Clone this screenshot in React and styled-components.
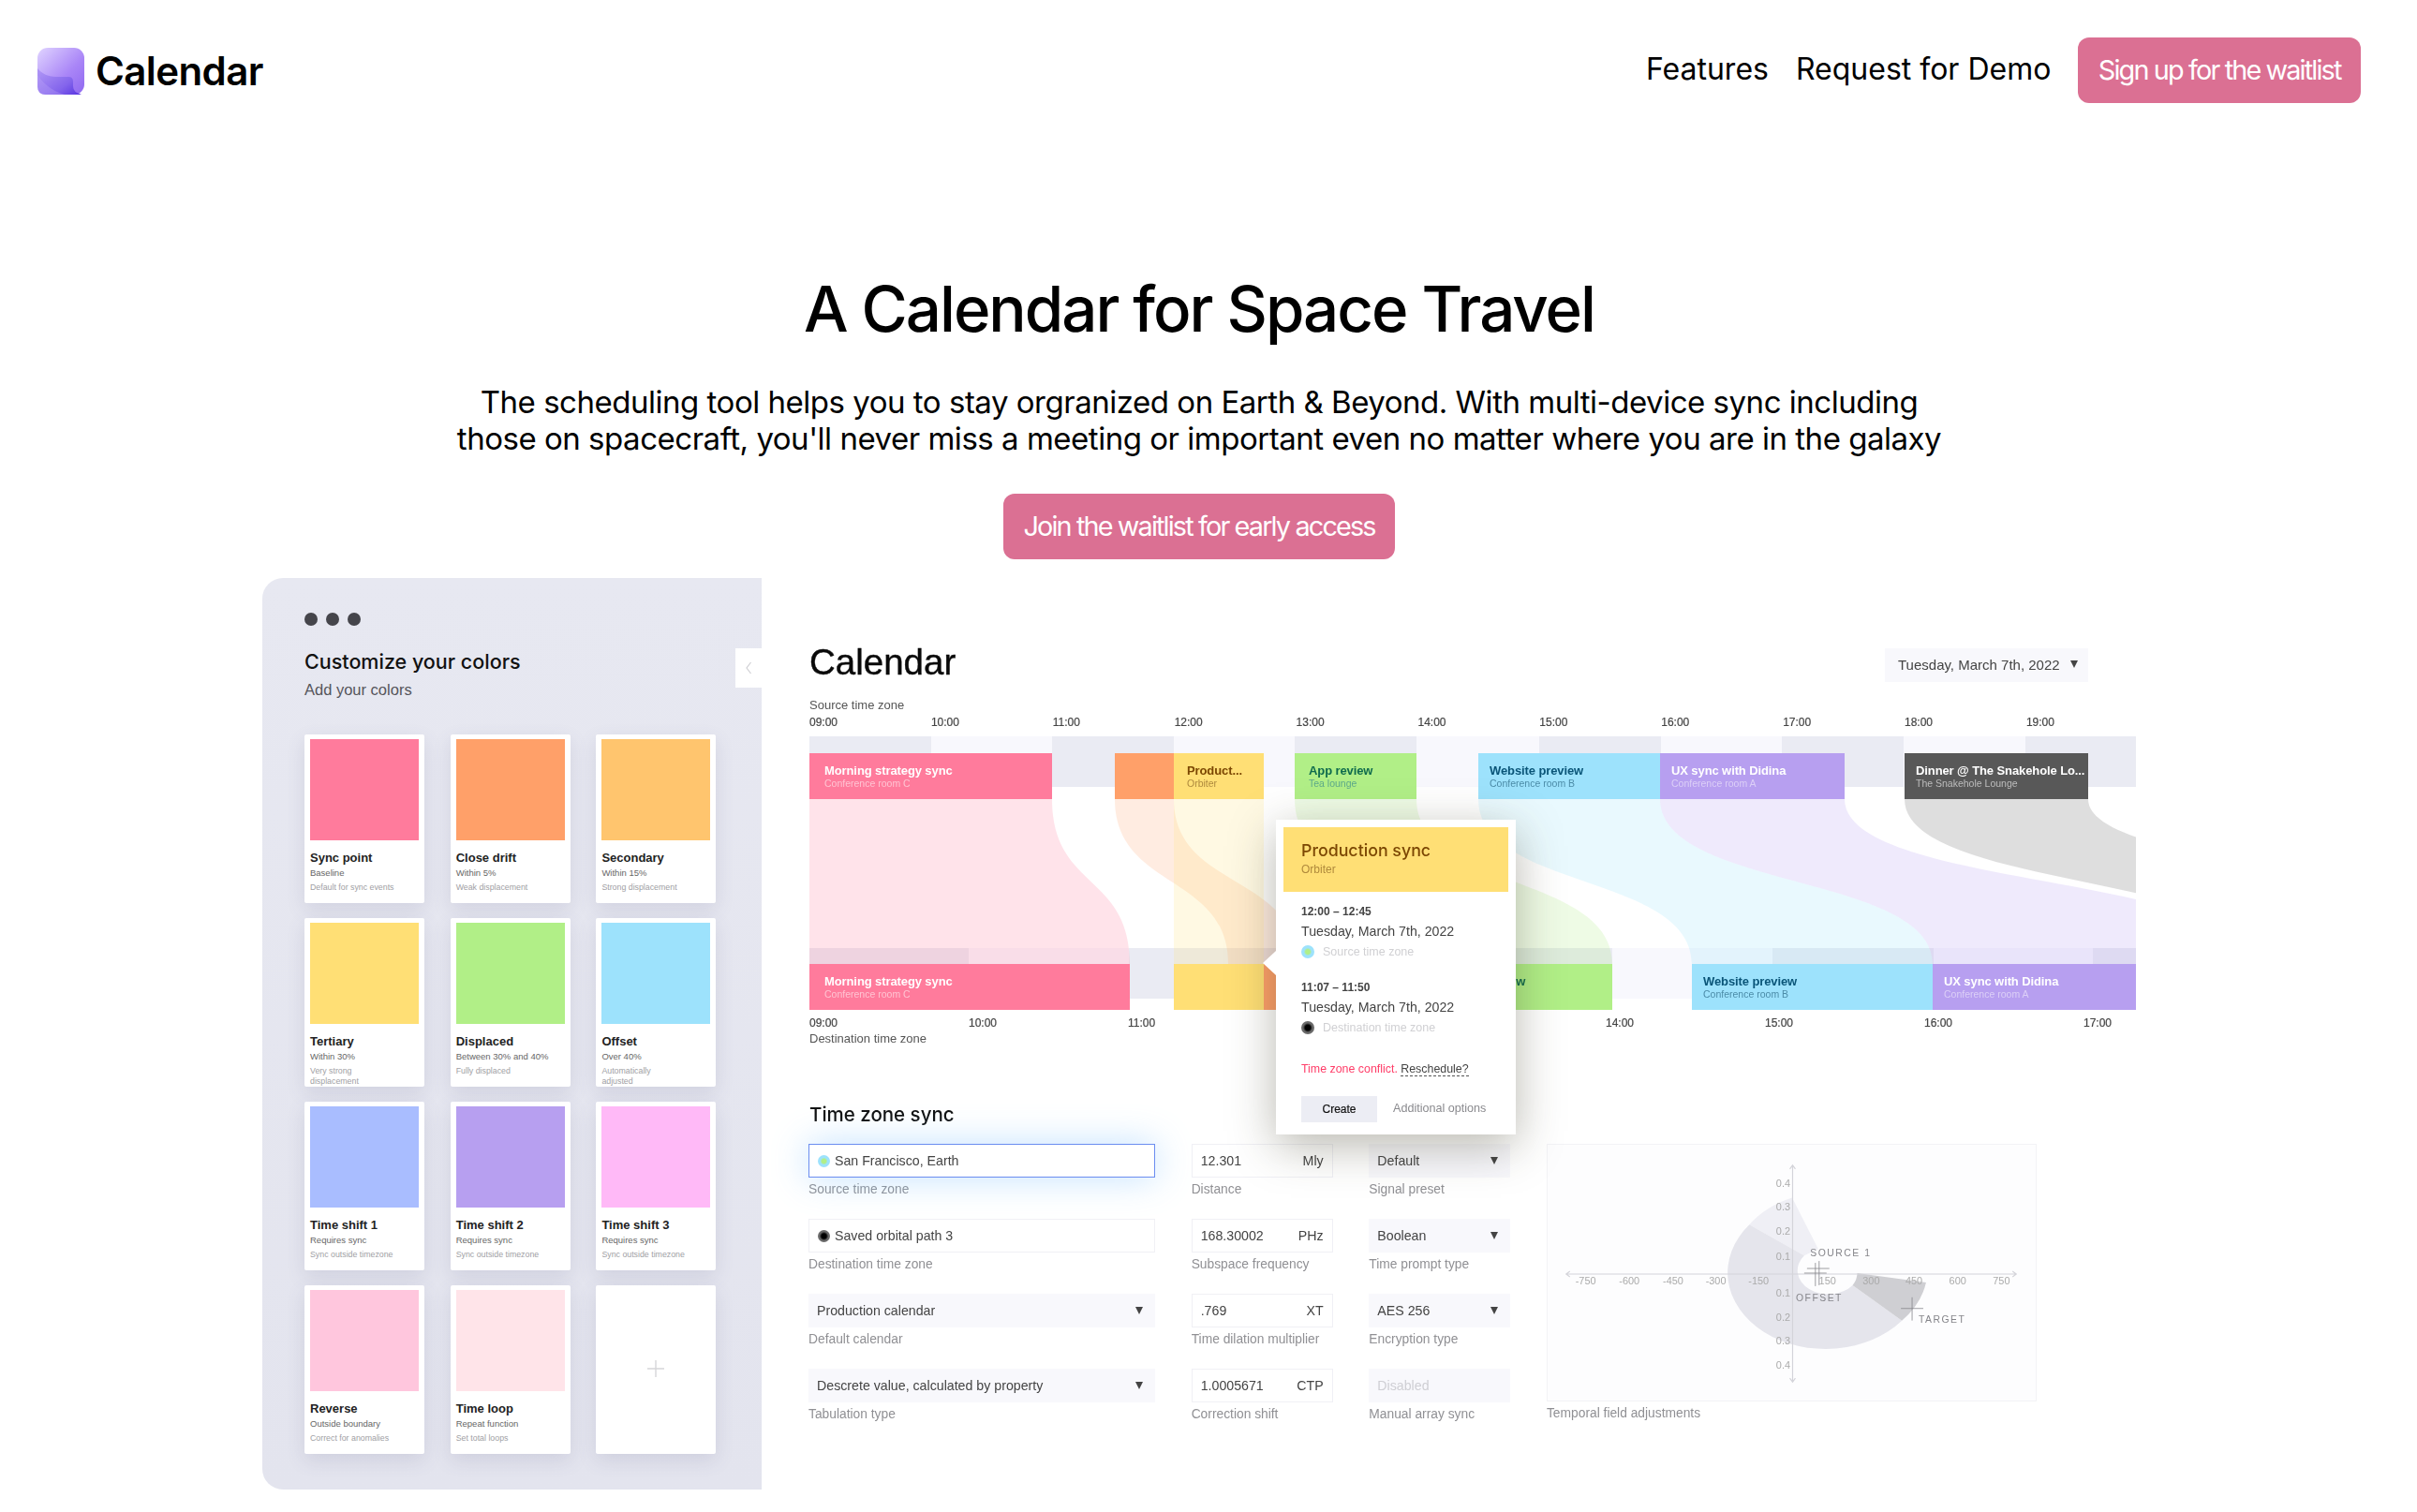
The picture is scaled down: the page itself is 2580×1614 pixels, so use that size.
import styled, { createGlobalStyle } from 'styled-components';

const GlobalStyle = createGlobalStyle`
  html, body {
    margin: 0;
    padding: 0;
    background: #fff;
  }
  body {
    font-family: 'Inter', 'Liberation Sans', sans-serif;
    color: #000;
  }
`;

const Page = styled.div`
  width: 2580px;
  height: 1614px;
  overflow: hidden;
`;

const Header = styled.header`
  display: flex;
  align-items: center;
  justify-content: space-between;
  padding: 40px 60px 0 40px;
`;

const Brand = styled.div`
  display: flex;
  align-items: center;
  gap: 12px;
  margin-top: 2px;
  font-size: 42px;
  font-weight: 600;
  letter-spacing: -0.6px;
  line-height: 52px;
`;

const Nav = styled.nav`
  display: flex;
  align-items: center;
  font-size: 32px;
`;

const NavLink = styled.a`
  margin: 0 29px 4px 0;
  color: #000;
`;

const PinkButton = styled.button`
  height: 70px;
  padding: 0 21.5px 2px;
  border: none;
  border-radius: 12px;
  background: #db7093;
  color: #fff;
  font-family: inherit;
  font-size: 28.8px;
  letter-spacing: -1.85px;
`;

const Hero = styled.section`
  display: flex;
  flex-direction: column;
  align-items: center;
  padding-right: 20px;
  text-align: center;
`;

const Title = styled.h1`
  margin: 180px 0 0;
  font-size: 67.2px;
  line-height: 80px;
  font-weight: 500;
  letter-spacing: -2px;
`;

const Lead = styled.p`
  margin: 40px 0 39px;
  font-size: 33px;
  line-height: 39px;
  letter-spacing: -0.48px;
`;

const Preview = styled.div`
  display: flex;
  width: 2000px;
  margin: 20px 0 0 280px;
  font-family: 'Liberation Sans', Arial, sans-serif;
  filter: blur(0.35px);
`;

const Sidebar = styled.aside`
  position: relative;
  box-sizing: border-box;
  flex: 0 0 533px;
  height: 973px;
  padding: 37px 0 0 45px;
  border-radius: 22px 0 0 22px;
  background: linear-gradient(180deg, #e7e8f1, #e3e4ee);
`;

const Dots = styled.div`
  display: flex;
  gap: 9px;
`;

const Dot = styled.span`
  width: 14px;
  height: 14px;
  border-radius: 50%;
  background: #45454b;
`;

const SideTitle = styled.h2`
  margin: 24px 0 0;
  font-family: 'Inter', sans-serif;
  font-size: 21.5px;
  line-height: 28px;
  font-weight: 500;
  color: #111;
`;

const SideSub = styled.div`
  margin-top: 6px;
  font-size: 16.5px;
  line-height: 20px;
  color: #55555b;
`;

const CollapseTab = styled.div`
  position: absolute;
  top: 75px;
  right: 0;
  display: flex;
  align-items: center;
  justify-content: center;
  width: 28px;
  height: 42px;
  background: #fff;
`;

const SwatchGrid = styled.div`
  display: grid;
  grid-template-columns: repeat(3, 128px);
  grid-auto-rows: 180px;
  column-gap: 27.7px;
  row-gap: 16px;
  margin-top: 38px;
`;

const Card = styled.div`
  box-sizing: border-box;
  padding: 5px 6px 0;
  border-radius: 2px;
  background: #fff;
  box-shadow: 0 7px 20px rgba(85, 85, 125, 0.14);
`;

const AddCard = styled(Card)`
  display: flex;
  align-items: center;
  justify-content: center;
  padding: 0 0 3px;
`;

const Swatch = styled.div`
  height: 108px;
  background: ${(p) => p.$color};
`;

const CardTitle = styled.div`
  margin-top: 11px;
  font-size: 13px;
  line-height: 16px;
  font-weight: 700;
  color: #222;
`;

const CardSub = styled.div`
  margin-top: 2px;
  font-size: 9.5px;
  line-height: 12px;
  color: #666;
`;

const CardDesc = styled.div`
  margin-top: 4px;
  font-size: 8.8px;
  line-height: 10.5px;
  color: #a0a0a4;
  white-space: pre-line;
`;

const Content = styled.main`
  flex: 1;
  min-width: 0;
  padding-left: 51px;
`;

const CalendarTop = styled.div`
  display: flex;
  align-items: center;
  justify-content: space-between;
  height: 36px;
  margin-top: 75px;
  padding-right: 51px;
`;

const CalendarTitle = styled.h2`
  margin: 0 0 6px;
  font-size: 38.5px;
  line-height: 46px;
  font-weight: 400;
  color: #0a0a0a;
  -webkit-text-stroke: 0.4px #0a0a0a;
`;

const DatePicker = styled.div`
  display: flex;
  align-items: center;
  justify-content: space-between;
  box-sizing: border-box;
  width: 217px;
  height: 36px;
  padding: 0 11px 2px 14px;
  background: #f8f8fc;
  font-size: 15px;
  color: #444;
`;

const Caret = styled.span`
  flex: none;
  width: 0;
  height: 0;
  border-left: 4.5px solid transparent;
  border-right: 4.5px solid transparent;
  border-top: 8px solid #444;
`;

const BoxCaret = styled(Caret)`
  margin-right: 4px;
`;

const ZoneLabel = styled.div`
  margin-top: ${(p) => p.$top}px;
  font-size: 13px;
  line-height: 16px;
  color: #555;
`;

const Hours = styled.div`
  display: flex;
  margin-top: ${(p) => p.$top}px;
`;

const Hour = styled.span`
  flex: 0 0 ${(p) => p.$width}px;
  font-size: 12px;
  line-height: 14px;
  color: #444;
  -webkit-text-stroke: 0.2px #444;
`;

const Timeline = styled.div`
  position: relative;
  width: 1416px;
  height: 291px;
  margin-top: 8px;
`;

const Strip = styled.div`
  display: flex;
  height: 54px;
  margin-top: ${(p) => p.$top}px;
`;

const StripCell = styled.div`
  background: ${(p) => (p.$dark ? '#eaebf3' : '#f8f8fd')};
`;

const Ribbons = styled.svg`
  position: absolute;
  top: 0;
  left: 0;
  overflow: hidden;
`;

const EventBlock = styled.div`
  position: absolute;
  box-sizing: border-box;
  height: 49px;
  padding: 11px 4px 0 ${(p) => p.$pad}px;
  overflow: hidden;
  background: ${(p) => p.$bg};
  white-space: nowrap;
`;

const EventName = styled.div`
  font-size: 13px;
  line-height: 15px;
  font-weight: 700;
  letter-spacing: -0.1px;
  color: ${(p) => p.$color};
`;

const EventPlace = styled.div`
  font-size: 10.5px;
  line-height: 12px;
  color: ${(p) => p.$color};
`;

const Popover = styled.div`
  position: absolute;
  left: 498px;
  top: 89px;
  z-index: 5;
  box-sizing: border-box;
  width: 256px;
  height: 336px;
  padding: 8px;
  background: #fff;
  box-shadow: 0 12px 46px rgba(62, 58, 35, 0.36);

  &::before {
    content: '';
    position: absolute;
    left: -14px;
    top: 140px;
    border-top: 13px solid transparent;
    border-bottom: 13px solid transparent;
    border-right: 14px solid #fff;
  }
`;

const PopHead = styled.div`
  box-sizing: border-box;
  height: 69px;
  padding: 14px 0 0 19px;
  background: #ffdf75;
`;

const PopTitle = styled.div`
  font-family: 'Inter', sans-serif;
  font-size: 17.8px;
  line-height: 22px;
  font-weight: 500;
  color: #7c4703;
`;

const PopSub = styled.div`
  margin-top: 2px;
  font-size: 12px;
  line-height: 14px;
  color: #b08a3c;
`;

const PopBody = styled.div`
  padding: 13px 0 0 19px;
`;

const TimeSlot = styled.div`
  margin-bottom: 22px;
`;

const SlotTime = styled.div`
  font-size: 12px;
  line-height: 16px;
  font-weight: 700;
  color: #444;
`;

const SlotDate = styled.div`
  margin-top: 4px;
  font-size: 14.2px;
  line-height: 18px;
  color: #444;
`;

const SlotZone = styled.div`
  display: flex;
  align-items: center;
  gap: 9px;
  margin-top: 5px;
  font-size: 12.5px;
  line-height: 16px;
  color: #d0d0d3;
`;

const ZoneDot = styled.span`
  flex: none;
  width: ${(p) => p.$size}px;
  height: ${(p) => p.$size}px;
  border-radius: 50%;
  background: ${(p) =>
    p.$kind === 'source'
      ? 'radial-gradient(circle closest-side, #b1ef87 0 34%, #9de2fc 60%)'
      : 'radial-gradient(circle closest-side, #000 0 40%, #6a6a6a 72%)'};
`;

const Conflict = styled.div`
  margin-top: 28px;
  font-size: 12.4px;
  line-height: 16px;
  color: #ff3d68;
`;

const Reschedule = styled.span`
  border-bottom: 1px dashed #555;
  color: #444;
`;

const PopActions = styled.div`
  display: flex;
  align-items: center;
  gap: 17px;
  margin-top: 21px;
`;

const CreateButton = styled.button`
  width: 81px;
  height: 28px;
  border: none;
  background: #ecedf4;
  font-family: inherit;
  font-size: 12px;
  color: #111;
  -webkit-text-stroke: 0.2px #111;
`;

const MoreOptions = styled.span`
  margin-bottom: 2px;
  font-size: 12.6px;
  color: #8a8a8e;
`;

const SyncTitle = styled.h3`
  margin: 60px 0 0;
  font-family: 'Inter', sans-serif;
  font-size: 20.5px;
  line-height: 26px;
  font-weight: 500;
  color: #111;
`;

const FormGrid = styled.div`
  display: grid;
  grid-template-columns: 370px 151px 151px 523px;
  grid-template-rows: repeat(4, 80px);
  column-gap: 38.67px;
  margin: 18px 0 0 -1px;
`;

const Field = styled.div`
  min-width: 0;
`;

const ChartField = styled(Field)`
  grid-column: 4;
  grid-row: 1 / span 4;
`;

const Box = styled.div`
  display: flex;
  align-items: center;
  justify-content: space-between;
  box-sizing: border-box;
  height: 36px;
  padding: 0 9px;
  font-size: 14.2px;
  color: #444;
  background: ${(p) => (p.$kind === 'select' || p.$kind === 'disabled' ? '#f8f8fc' : '#fff')};
  border: ${(p) => (p.$kind === 'select' || p.$kind === 'disabled' ? 'none' : '1px solid #f0f0f5')};
`;

const FocusBox = styled(Box)`
  position: relative;
  border: 1.5px solid #6b8df0;
  box-shadow: 0 0 38px rgba(120, 190, 255, 0.45);
`;

const BoxText = styled.span`
  display: flex;
  align-items: center;
  gap: 5px;
  color: ${(p) => (p.$muted ? '#cfcfd4' : '#444')};
`;

const FieldLabel = styled.div`
  margin-top: 5px;
  font-size: 13.8px;
  line-height: 16px;
  color: #909094;
`;

const Chart = styled.svg`
  display: block;
  box-sizing: border-box;
  background: #fdfdfe;
  border: 1px solid #f3f3f6;
`;

const AxisText = styled.text`
  font-family: 'Liberation Sans', Arial, sans-serif;
  font-size: 11px;
  fill: #aaa;
`;

const ChartTag = styled.text`
  font-family: 'Liberation Sans', Arial, sans-serif;
  font-size: 10.5px;
  letter-spacing: 1.5px;
  fill: #85858a;
`;

const swatches = [
  { color: '#ff7b9c', title: 'Sync point', sub: 'Baseline', desc: 'Default for sync events' },
  { color: '#ffa069', title: 'Close drift', sub: 'Within 5%', desc: 'Weak displacement' },
  { color: '#ffc56e', title: 'Secondary', sub: 'Within 15%', desc: 'Strong displacement' },
  { color: '#ffdf75', title: 'Tertiary', sub: 'Within 30%', desc: 'Very strong\ndisplacement' },
  { color: '#b1ef87', title: 'Displaced', sub: 'Between 30% and 40%', desc: 'Fully displaced' },
  { color: '#9de2fc', title: 'Offset', sub: 'Over 40%', desc: 'Automatically\nadjusted' },
  { color: '#a9bdff', title: 'Time shift 1', sub: 'Requires sync', desc: 'Sync outside timezone' },
  { color: '#b79ff0', title: 'Time shift 2', sub: 'Requires sync', desc: 'Sync outside timezone' },
  { color: '#ffb9f7', title: 'Time shift 3', sub: 'Requires sync', desc: 'Sync outside timezone' },
  { color: '#ffc6dd', title: 'Reverse', sub: 'Outside boundary', desc: 'Correct for anomalies' },
  { color: '#ffe4e9', title: 'Time loop', sub: 'Repeat function', desc: 'Set total loops' },
];

const ORIGIN = 864;
const topEdges = [864, 994, 1123, 1253, 1382, 1512, 1643, 1773, 1902, 2032, 2162, 2280];
const bottomEdges = [864, 1034, 1205, 1375, 1550, 1721, 1892, 2064, 2234, 2280];

const topHours = ['09:00', '10:00', '11:00', '12:00', '13:00', '14:00', '15:00', '16:00', '17:00', '18:00', '19:00'];
const bottomHours = ['09:00', '10:00', '11:00', '12:00', '13:00', '14:00', '15:00', '16:00', '17:00'];

const pink = { bg: '#ff7b9c', name: '#fff', place: 'rgba(255,255,255,.55)' };
const yellow = { bg: '#ffdf75', name: '#7c4703', place: '#ae8a3e' };
const orange = { bg: '#ffa069', name: '#fff', place: '#fff' };
const green = { bg: '#b1ef87', name: '#0f6b4d', place: '#5da98a' };
const blue = { bg: '#9de2fc', name: '#0a5578', place: '#4c8ca8' };
const purple = { bg: '#b79ff0', name: '#fff', place: '#dccff7' };
const dark = { bg: '#585858', name: '#fff', place: '#bdbdbd' };

const events = [
  { from: 864, to: 1123, top: 18, pad: 16, tone: pink, name: 'Morning strategy sync', place: 'Conference room C' },
  { from: 1190, to: 1253, top: 18, pad: 14, tone: orange },
  { from: 1253, to: 1349, top: 18, pad: 14, tone: yellow, name: 'Product...', place: 'Orbiter' },
  { from: 1382, to: 1512, top: 18, pad: 15, tone: green, name: 'App review', place: 'Tea lounge' },
  { from: 1578, to: 1772, top: 18, pad: 12, tone: blue, name: 'Website preview', place: 'Conference room B' },
  { from: 1772, to: 1969, top: 18, pad: 12, tone: purple, name: 'UX sync with Didina', place: 'Conference room A' },
  { from: 2033, to: 2229, top: 18, pad: 12, tone: dark, name: 'Dinner @ The Snakehole Lo...', place: 'The Snakehole Lounge' },
  { from: 864, to: 1206, top: 243, pad: 16, tone: pink, name: 'Morning strategy sync', place: 'Conference room C' },
  { from: 1253, to: 1349, top: 243, pad: 14, tone: yellow },
  { from: 1349, to: 1385, top: 243, pad: 14, tone: orange },
  { from: 1545, to: 1721, top: 243, pad: 15, tone: green, name: 'App review', place: 'Tea lounge' },
  { from: 1806, to: 2063, top: 243, pad: 12, tone: blue, name: 'Website preview', place: 'Conference room B' },
  { from: 2063, to: 2280, top: 243, pad: 12, tone: purple, name: 'UX sync with Didina', place: 'Conference room A' },
];

const ribbons = [
  { t: [864, 1123], b: [864, 1206], fill: 'rgba(255,123,156,.21)' },
  { t: [1190, 1253], b: [1311, 1385], fill: 'rgba(255,160,105,.2)' },
  { t: [1253, 1349], b: [1253, 1349], fill: 'rgba(255,223,117,.2)' },
  { t: [1382, 1512], b: [1545, 1721], fill: 'rgba(177,239,135,.22)' },
  { t: [1578, 1772], b: [1806, 2063], fill: 'rgba(157,226,252,.22)' },
  { t: [1772, 1969], b: [2063, 2400], fill: 'rgba(183,159,240,.22)' },
  { t: [2033, 2229], b: [2413, 2900], fill: 'rgba(88,88,88,.2)' },
];

const ribbonPath = ({ t, b }) => {
  const [a, c] = t.map((x) => x - ORIGIN);
  const [d, e] = b.map((x) => x - ORIGIN);
  return `M${a} 67 C${a} 164 ${d} 146 ${d} 243 L${e} 243 C${e} 146 ${c} 164 ${c} 67 Z`;
};

const cellsFrom = (edges) =>
  edges.slice(1).map((edge, i) => ({ width: edge - edges[i], dark: i % 2 === 0 }));

const fields = [
  { kind: 'focus', dot: 'source', value: 'San Francisco, Earth', label: 'Source time zone' },
  { kind: 'input', value: '12.301', unit: 'Mly', label: 'Distance' },
  { kind: 'select', value: 'Default', label: 'Signal preset' },
  { kind: 'input', dot: 'dest', value: 'Saved orbital path 3', label: 'Destination time zone' },
  { kind: 'input', value: '168.30002', unit: 'PHz', label: 'Subspace frequency' },
  { kind: 'select', value: 'Boolean', label: 'Time prompt type' },
  { kind: 'select', value: 'Production calendar', label: 'Default calendar' },
  { kind: 'input', value: '.769', unit: 'XT', label: 'Time dilation multiplier' },
  { kind: 'select', value: 'AES 256', label: 'Encryption type' },
  { kind: 'select', value: 'Descrete value, calculated by property', label: 'Tabulation type' },
  { kind: 'input', value: '1.0005671', unit: 'CTP', label: 'Correction shift' },
  { kind: 'disabled', value: 'Disabled', label: 'Manual array sync' },
];

const xTicks = [
  ['-750', 40], ['-600', 87], ['-450', 134], ['-300', 180], ['-150', 226],
  ['150', 300], ['300', 347], ['450', 393], ['600', 440], ['750', 487],
];
const yTicks = [
  ['0.4', 41], ['0.3', 67], ['0.2', 93], ['0.1', 120],
  ['0.1', 159], ['0.2', 185], ['0.3', 211], ['0.4', 237],
];

const Logo = () => (
  <svg width="50" height="50" viewBox="0 0 50 50">
    <defs>
      <linearGradient id="logoBase" x1="0" y1="0" x2="1" y2="1">
        <stop offset="0" stopColor="#e0d4ff" />
        <stop offset="0.6" stopColor="#a985f7" />
        <stop offset="1" stopColor="#8f68f0" />
      </linearGradient>
      <linearGradient id="logoFold" x1="0" y1="0.2" x2="1" y2="1">
        <stop offset="0" stopColor="#ac92f5" />
        <stop offset="0.6" stopColor="#8465ec" />
        <stop offset="1" stopColor="#5632e0" />
      </linearGradient>
    </defs>
    <rect width="50" height="50" rx="11" fill="url(#logoBase)" />
    <path d="M0 22 C4 27 11 31 20 31 H33 Q38 31 38 36 V41 Q38 48 47 49.5 Q45 50 41 50 H9 Q0 50 0 41 Z" fill="url(#logoFold)" />
    <path d="M0 29 C5 37 15 46 29 50 H9 Q0 50 0 41 Z" fill="#c0a9fa" opacity="0.3" />
  </svg>
);

const SectorChart = () => (
  <Chart width="523" height="275" viewBox="0 0 523 275">
    <path d="M262 57 A104 81 0 0 0 216 86 L275 119 L290 112 Z" fill="#efeff5" />
    <path d="M216 86 A104 81 0 1 0 380 189 L327 151 A31 24 0 1 1 275 119 Z" fill="#e5e5ec" />
    <path d="M380 189 A104 81 0 0 0 406 148 L332 138 A31 24 0 0 1 327 151 Z" fill="#cfcfd3" />
    <g stroke="#d4d4da" strokeWidth="1.2" fill="none">
      <path d="M19 139 H503 M23 136 L19 139 L23 142 M499 136 L503 139 L499 142" />
      <path d="M262.5 22 V255 M259.5 26 L262.5 22 L265.5 26 M259.5 251 L262.5 255 L265.5 251" />
    </g>
    <g stroke="#85858a" strokeWidth="0.8">
      <path d="M278 133 H302 M291 125 V151" />
      <path d="M275 138 H299 M287 127 V152" />
      <path d="M379 176 H403 M391 164 V189" />
    </g>
    {xTicks.map(([label, x]) => (
      <AxisText key={label} x={x} y={150} textAnchor="middle">{label}</AxisText>
    ))}
    {yTicks.map(([label, y]) => (
      <AxisText key={`${label}-${y}`} x={260} y={y + 4} textAnchor="end">{label}</AxisText>
    ))}
    <ChartTag x={281.5} y={119.5}>SOURCE 1</ChartTag>
    <ChartTag x={266} y={168.5}>OFFSET</ChartTag>
    <ChartTag x={398} y={191}>TARGET</ChartTag>
  </Chart>
);

const FormField = ({ field }) => {
  const Wrapper = field.kind === 'focus' ? FocusBox : Box;
  return (
    <Field>
      <Wrapper $kind={field.kind}>
        <BoxText $muted={field.kind === 'disabled'}>
          {field.dot && <ZoneDot $kind={field.dot === 'source' ? 'source' : 'dest'} $size={13} />}
          {field.value}
        </BoxText>
        {field.unit && <BoxText>{field.unit}</BoxText>}
        {field.kind === 'select' && <BoxCaret />}
      </Wrapper>
      <FieldLabel>{field.label}</FieldLabel>
    </Field>
  );
};

export default function App() {
  return (
    <Page>
      <GlobalStyle />
      <Header>
        <Brand>
          <Logo />
          Calendar
        </Brand>
        <Nav>
          <NavLink>Features</NavLink>
          <NavLink>Request for Demo</NavLink>
          <PinkButton>Sign up for the waitlist</PinkButton>
        </Nav>
      </Header>

      <Hero>
        <Title>A Calendar for Space Travel</Title>
        <Lead>
          The scheduling tool helps you to stay orgranized on Earth &amp; Beyond. With multi-device sync including
          <br />
          those on spacecraft, you'll never miss a meeting or important even no matter where you are in the galaxy
        </Lead>
        <PinkButton>Join the waitlist for early access</PinkButton>
      </Hero>

      <Preview>
        <Sidebar>
          <Dots>
            <Dot />
            <Dot />
            <Dot />
          </Dots>
          <SideTitle>Customize your colors</SideTitle>
          <SideSub>Add your colors</SideSub>
          <CollapseTab>
            <svg width="8" height="14" viewBox="0 0 8 14">
              <path d="M6.5 1 L2 7 L6.5 13" fill="none" stroke="#cfcfd3" strokeWidth="1.2" />
            </svg>
          </CollapseTab>
          <SwatchGrid>
            {swatches.map((s) => (
              <Card key={s.title}>
                <Swatch $color={s.color} />
                <CardTitle>{s.title}</CardTitle>
                <CardSub>{s.sub}</CardSub>
                <CardDesc>{s.desc}</CardDesc>
              </Card>
            ))}
            <AddCard>
              <svg width="18" height="18" viewBox="0 0 18 18">
                <path d="M9 0 V18 M0 9 H18" stroke="#d6d6d9" strokeWidth="1.4" />
              </svg>
            </AddCard>
          </SwatchGrid>
        </Sidebar>

        <Content>
          <CalendarTop>
            <CalendarTitle>Calendar</CalendarTitle>
            <DatePicker>
              Tuesday, March 7th, 2022
              <Caret />
            </DatePicker>
          </CalendarTop>
          <ZoneLabel $top={17}>Source time zone</ZoneLabel>
          <Hours $top={3}>
            {topHours.map((h) => (
              <Hour key={h} $width={129.9}>{h}</Hour>
            ))}
          </Hours>

          <Timeline>
            <Strip $top={0}>
              {cellsFrom(topEdges).map((c, i) => (
                <StripCell key={i} $dark={c.dark} style={{ width: c.width }} />
              ))}
            </Strip>
            <Strip $top={172}>
              {cellsFrom(bottomEdges).map((c, i) => (
                <StripCell key={i} $dark={c.dark} style={{ width: c.width }} />
              ))}
            </Strip>
            <Ribbons width="1416" height="291" viewBox="0 0 1416 291">
              {ribbons.map((r, i) => (
                <path key={i} d={ribbonPath(r)} fill={r.fill} />
              ))}
            </Ribbons>
            {events.map((e, i) => (
              <EventBlock
                key={i}
                $bg={e.tone.bg}
                $pad={e.pad}
                style={{ left: e.from - ORIGIN, width: e.to - e.from, top: e.top }}
              >
                {e.name && <EventName $color={e.tone.name}>{e.name}</EventName>}
                {e.place && <EventPlace $color={e.tone.place}>{e.place}</EventPlace>}
              </EventBlock>
            ))}
            <Popover>
              <PopHead>
                <PopTitle>Production sync</PopTitle>
                <PopSub>Orbiter</PopSub>
              </PopHead>
              <PopBody>
                <TimeSlot>
                  <SlotTime>12:00 – 12:45</SlotTime>
                  <SlotDate>Tuesday, March 7th, 2022</SlotDate>
                  <SlotZone>
                    <ZoneDot $kind="source" $size={14} />
                    Source time zone
                  </SlotZone>
                </TimeSlot>
                <TimeSlot>
                  <SlotTime>11:07 – 11:50</SlotTime>
                  <SlotDate>Tuesday, March 7th, 2022</SlotDate>
                  <SlotZone>
                    <ZoneDot $kind="dest" $size={14} />
                    Destination time zone
                  </SlotZone>
                </TimeSlot>
                <Conflict>
                  Time zone conflict. <Reschedule>Reschedule?</Reschedule>
                </Conflict>
                <PopActions>
                  <CreateButton>Create</CreateButton>
                  <MoreOptions>Additional options</MoreOptions>
                </PopActions>
              </PopBody>
            </Popover>
          </Timeline>

          <Hours $top={8}>
            {bottomHours.map((h) => (
              <Hour key={h} $width={170}>{h}</Hour>
            ))}
          </Hours>
          <ZoneLabel $top={2}>Destination time zone</ZoneLabel>

          <SyncTitle>Time zone sync</SyncTitle>
          <FormGrid>
            <ChartField>
              <SectorChart />
              <FieldLabel>Temporal field adjustments</FieldLabel>
            </ChartField>
            {fields.map((f) => (
              <FormField key={f.label} field={f} />
            ))}
          </FormGrid>
        </Content>
      </Preview>
    </Page>
  );
}
